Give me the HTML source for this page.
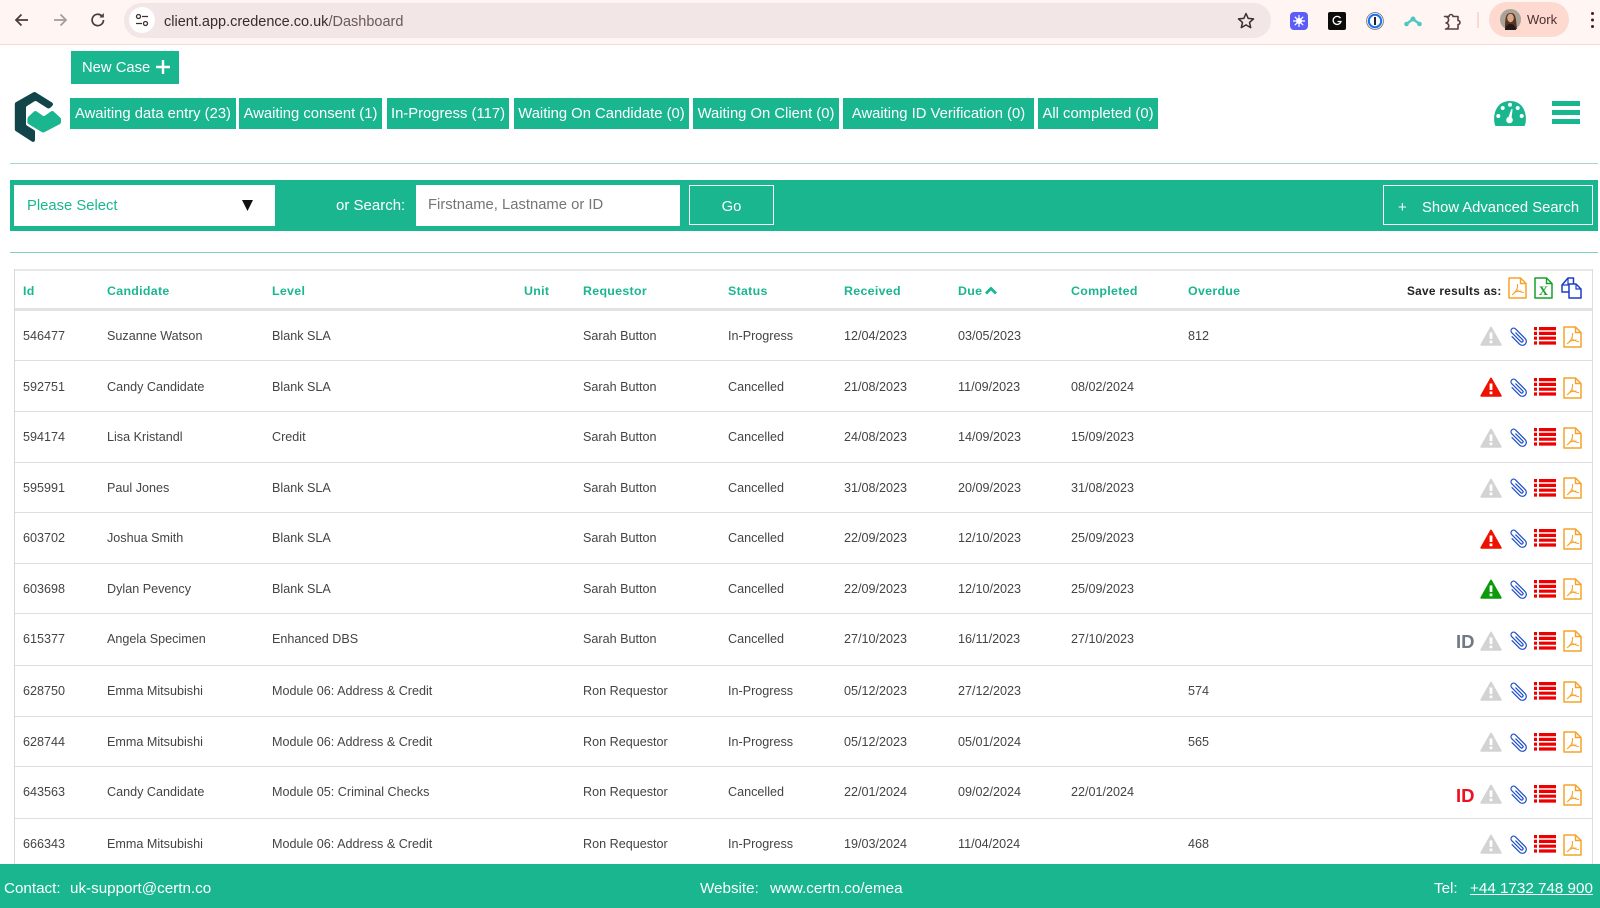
<!DOCTYPE html>
<html lang="en"><head><meta charset="utf-8"><title>Dashboard</title>
<style>
html,body{margin:0;padding:0;width:1600px;height:908px;overflow:hidden;background:#fff;font-family:"Liberation Sans",Arial,sans-serif}
#p{position:relative;width:1600px;height:908px;overflow:hidden}
.a,.r,.b,.h{position:absolute}
svg{display:block;overflow:visible}
#ch{left:0;top:0;width:1600px;height:44px;background:#fff5f2;border-bottom:1px solid #fbd9d0}
#om{left:124px;top:3px;width:1147px;height:35px;border-radius:18px;background:#f2e6e6}
.b{background:#1ab690;color:#fff;font-size:14.8px;line-height:33px;height:31px;top:98px;text-align:center;white-space:nowrap}
.r{left:0;width:1600px;height:16px;font-size:12.6px;line-height:16px;color:#444}
.r span{position:absolute;white-space:nowrap;top:0}
.c1{left:23px}.c2{left:107px}.c3{left:272px}.c5{left:583px}.c6{left:728px}.c7{left:844px}.c8{left:958px}.c9{left:1071px}.c10{left:1188px}
.h{top:283px;font-size:12.4px;line-height:16px;font-weight:bold;color:#1ab690;letter-spacing:.3px;white-space:nowrap}
.l{position:absolute;left:15px;width:1577px;height:1px;background:#dedede}
.id{position:absolute;font-size:18.5px;font-weight:bold;line-height:20px;white-space:nowrap;left:1456px}
.f{position:absolute;top:880px;color:#fff;font-size:15.2px;line-height:18px;white-space:nowrap}
</style></head><body><div id="p">

<svg width="0" height="0" style="position:absolute">
<defs>
<symbol id="pdf" viewBox="0 0 19 22"><path d="M1 1h11.500L18 6.500V21H1z" fill="#fff" stroke="#f5a32a" stroke-width="1.500" stroke-linejoin="round"/><path d="M12.500 1v5.500H18" fill="none" stroke="#f5a32a" stroke-width="1.400"/><path d="M9.500 7C10 11 8 15 4 18M9 12.500C10.500 14.500 13 15.500 16 15.500M6 15.500C8.500 14.500 11 14 13.500 14" fill="none" stroke="#f5a32a" stroke-width="1"/></symbol>
<symbol id="wg" viewBox="0 0 22 20"><path d="M11 1.500 20.800 18.800H1.200z" fill="#d3d3d3" stroke="#d3d3d3" stroke-width="1.800" stroke-linejoin="round"/><path d="M9.600 6.500h2.800v6.500H9.600zM9.600 14.500h2.800v2.800H9.600z" fill="#fff"/></symbol>
<symbol id="wr" viewBox="0 0 22 20"><path d="M11 1.500 20.800 18.800H1.200z" fill="#ee1100" stroke="#ee1100" stroke-width="1.800" stroke-linejoin="round"/><path d="M9.600 6.500h2.800v6.500H9.600zM9.600 14.500h2.800v2.800H9.600z" fill="#fff"/></symbol>
<symbol id="wn" viewBox="0 0 22 20"><path d="M11 1.500 20.800 18.800H1.200z" fill="#0a9a0a" stroke="#0a9a0a" stroke-width="1.800" stroke-linejoin="round"/><path d="M9.600 6.500h2.800v6.500H9.600zM9.600 14.500h2.800v2.800H9.600z" fill="#fff"/></symbol>
<symbol id="clip" viewBox="0 0 18 20"><g transform="rotate(-45 9 10) translate(9 10) scale(.88) translate(-9 -10)"><path d="M10.500 5V16a1.500 1.500 0 0 1-3 0V1.500a3 3 0 0 1 6 0V17a4.500 4.500 0 0 1-9 0V5" fill="none" stroke="#1f4fc8" stroke-width="1.400" stroke-linecap="round"/></g></symbol>
<symbol id="list" viewBox="0 0 22 18"><g fill="#ee0000"><path d="M0 0h3v3.200H0zM5 0h17v3.200H5zM0 4.800h3V8H0zM5 4.800h17V8H5zM0 9.600h3v3.200H0zM5 9.600h17v3.200H5zM0 14.400h3v3.200H0zM5 14.400h17v3.200H5z"/></g></symbol>
</defs></svg>

<!-- browser chrome -->
<div class="a" id="ch"></div>
<div class="a" id="om"></div>
<svg class="a" style="left:13px;top:12px" width="18" height="16" viewBox="0 0 18 16"><path d="M15 8H3M8.500 2.500 3 8l5.500 5.500" fill="none" stroke="#4a3a3a" stroke-width="1.700"/></svg>
<svg class="a" style="left:51px;top:12px" width="18" height="16" viewBox="0 0 18 16"><path d="M3 8h12M9.500 2.500 15 8l-5.500 5.500" fill="none" stroke="#a89a9a" stroke-width="1.700"/></svg>
<svg class="a" style="left:89px;top:11px" width="18" height="18" viewBox="0 0 18 18"><path d="M14.500 9a5.700 5.700 0 1 1-1.700-4.100" fill="none" stroke="#4a3a3a" stroke-width="1.700"/><path d="M14.800 2v4.500h-4.500z" fill="#4a3a3a"/></svg>
<div class="a" style="left:129px;top:7px;width:26px;height:26px;border-radius:50%;background:#fff"></div>
<svg class="a" style="left:135px;top:13px" width="14" height="14" viewBox="0 0 14 14"><circle cx="3.500" cy="3.500" r="2" fill="none" stroke="#3e2e2e" stroke-width="1.300"/><circle cx="10.500" cy="10.500" r="2" fill="none" stroke="#3e2e2e" stroke-width="1.300"/><path d="M7 3.500h6M1 10.500h6" stroke="#3e2e2e" stroke-width="1.300"/></svg>
<div class="a" style="left:164px;top:12.500px;font-size:14.500px;line-height:18px;color:#6a5a5a;white-space:nowrap"><span style="color:#3a2c2c">client.app.credence.co.uk</span>/Dashboard</div>
<svg class="a" style="left:1237px;top:12px" width="18" height="17" viewBox="0 0 18 17"><path d="M9 1.500l2.200 4.900 5.300.5-4 3.500 1.200 5.200L9 12.900 4.300 15.600l1.200-5.200-4-3.500 5.300-.5z" fill="none" stroke="#3e2e2e" stroke-width="1.500" stroke-linejoin="round"/></svg>
<div class="a" style="left:1290px;top:12px;width:18px;height:18px;border-radius:4px;background:#5c5cf6"></div>
<svg class="a" style="left:1293px;top:15px" width="12" height="12" viewBox="0 0 12 12"><circle cx="6" cy="6" r="3" fill="#fff"/><path d="M6 0v12M0 6h12M1.800 1.800l8.400 8.400M10.200 1.800l-8.400 8.400" stroke="#fff" stroke-width="1.200"/></svg>
<div class="a" style="left:1328px;top:12px;width:18px;height:18px;border-radius:2px;background:#0b0b0b"></div>
<svg class="a" style="left:1332px;top:16px" width="10" height="10" viewBox="0 0 10 10"><path d="M8.500 2.200A4 4 0 1 0 9 5.500H5.500" fill="none" stroke="#fff" stroke-width="1.300"/></svg>
<svg class="a" style="left:1366px;top:12px" width="18" height="18" viewBox="0 0 18 18"><circle cx="9" cy="9" r="8.400" fill="#fff" stroke="#777" stroke-width=".9"/><circle cx="9" cy="9" r="6.200" fill="none" stroke="#1a73e8" stroke-width="2"/><rect x="8" y="5" width="2" height="8" fill="#223"/></svg>
<svg class="a" style="left:1404px;top:15px" width="18" height="12" viewBox="0 0 18 12"><path d="M2.500 9 9 4l6.500 5" fill="none" stroke="#4ec8c0" stroke-width="2.400"/><circle cx="2.500" cy="9" r="2.300" fill="#4ec8c0"/><circle cx="9" cy="4" r="2.500" fill="#4ec8c0"/><circle cx="15.500" cy="9" r="2.300" fill="#4ec8c0"/></svg>
<svg class="a" style="left:1443px;top:12px" width="18" height="18" viewBox="0 0 18 18"><path d="M1.500 4.500H6a2 2 0 1 1 4 0h5v4a2 2 0 1 1 0 4v4.500H2.500a2.800 2.800 0 0 0 .5-6 3 3 0 0 0-1.500-6.500z" fill="none" stroke="#5a4040" stroke-width="1.600" stroke-linejoin="round"/></svg>
<div class="a" style="left:1477px;top:12px;width:2px;height:16px;background:#fbd9d0"></div>
<div class="a" style="left:1489px;top:2px;width:80px;height:35px;border-radius:18px;background:#fdd9d0"></div>
<svg class="a" style="left:1500px;top:9px" width="21" height="21" viewBox="0 0 21 21"><circle cx="10.500" cy="10.500" r="10.500" fill="#a9a296"/><path d="M5 21c0-14 1-17 6-17s5 6 6 16z" fill="#5a3420"/><ellipse cx="10.500" cy="9" rx="3.300" ry="4.200" fill="#d8a888"/><path d="M5 21c1-5 3-6 5.500-6s5 1 5.500 6z" fill="#201a18"/></svg>
<div class="a" style="left:1527px;top:12px;font-size:13px;line-height:16px;color:#4a3030">Work</div>
<div class="a" style="left:1590.500px;top:11.500px;width:3px;height:3px;border-radius:50%;background:#4a1a1a;box-shadow:0 6.500px 0 #4a1a1a,0 13px 0 #4a1a1a"></div>

<!-- header -->
<div class="b" style="left:71px;top:51px;width:108px;height:33px;line-height:34px;text-align:left;text-indent:11px">New Case</div>
<svg class="a" style="left:156px;top:60px" width="14" height="14" viewBox="0 0 14 14"><path d="M7 0v14M0 7h14" stroke="#fff" stroke-width="2.400"/></svg>

<svg class="a" style="left:14px;top:91px" width="50" height="52" viewBox="14 91 50 52"><path d="M33 92.500c1-.6 2-.6 3 0l16 10c1.200.8 1.300 2.300.3 3.300l-2 2c-.8.800-2 .9-3 .3l-10.800-6.800c-.7-.4-1.300-.4-2 0l-7.500 4.700c-.7.400-1 1-1 1.800v16c0 .8.300 1.400 1 1.800l7 4.400c.7.400 1 1 1 1.800v8c0 1.800-1.600 2.700-3 1.800l-16-10.300c-.8-.5-1.200-1.300-1.200-2.200v-24.800c0-.9.400-1.700 1.200-2.200z" fill="#12454a"/><path d="M27.500 117.500l6.500-6c.8-.7 1.800-.7 2.600-.1l6.200 4.400c.7.500 1.300.5 2 0l6.200-4.400c.8-.6 1.800-.6 2.600.1l6.500 6c.6.500.9 1.200.9 2v2.500c0 .9-.4 1.600-1.200 2.100l-15.200 8c-1 .5-1.800.5-2.800 0l-13.200-8c-.8-.5-1.200-1.200-1.200-2.100v-2.500c0-.8.300-1.500 1-2z" fill="#1ab690"/></svg>

<div class="b" style="left:70px;width:166px">Awaiting data entry (23)</div>
<div class="b" style="left:239px;width:143px">Awaiting consent (1)</div>
<div class="b" style="left:387px;width:122px">In-Progress (117)</div>
<div class="b" style="left:514px;width:175px">Waiting On Candidate (0)</div>
<div class="b" style="left:693px;width:146px">Waiting On Client (0)</div>
<div class="b" style="left:843px;width:191px">Awaiting ID Verification (0)</div>
<div class="b" style="left:1038px;width:120px">All completed (0)</div>

<svg class="a" style="left:1494px;top:101px" width="32" height="25" viewBox="0 0 32 25"><path d="M1.500 25C-1.500 20-1 0 16 0S33.500 20 30.500 25z" fill="#1ab690"/><g fill="#fff"><circle cx="16" cy="3.800" r="2"/><circle cx="8.700" cy="7" r="2"/><circle cx="23.700" cy="7" r="2"/><circle cx="4.300" cy="15" r="2"/><circle cx="27.700" cy="15" r="2"/><circle cx="15.500" cy="19" r="3.300"/><path d="M13.800 18 17.300 8.300h1.300L17.300 19z"/></g></svg>
<div class="a" style="left:1552px;top:101px;width:28px;height:5px;background:#1ab690"></div>
<div class="a" style="left:1552px;top:110px;width:28px;height:5px;background:#1ab690"></div>
<div class="a" style="left:1552px;top:119px;width:28px;height:5px;background:#1ab690"></div>
<div class="a" style="left:10px;top:163px;width:1588px;height:1px;background:#a5d8c6"></div>

<!-- search bar -->
<div class="a" style="left:10px;top:180px;width:1588px;height:51px;background:#1ab690"></div>
<div class="a" style="left:14px;top:185px;width:261px;height:41px;background:#fff"></div>
<div class="a" style="left:27px;top:197px;font-size:14.800px;line-height:18px;color:#1ab690">Please Select</div>
<svg class="a" style="left:242px;top:200px" width="11" height="11" viewBox="0 0 11 11"><path d="M0 0h11L5.500 11z" fill="#111"/></svg>
<div class="a" style="left:336px;top:196.500px;font-size:15px;line-height:18px;color:#fff">or Search:</div>
<div class="a" style="left:416px;top:185px;width:264px;height:41px;background:#fff"></div>
<div class="a" style="left:428px;top:196px;font-size:14.800px;line-height:18px;color:#757575">Firstname, Lastname or ID</div>
<div class="a" style="left:689px;top:185px;width:83px;height:38px;border:1px solid #fff;color:#fff;font-size:14.800px;line-height:43px;text-align:center">Go</div>
<div class="a" style="left:1383px;top:185px;width:208px;height:38px;border:1px solid #fff"></div>
<div class="a" style="left:1398px;top:199px;font-size:15px;line-height:18px;color:#fff">+</div>
<div class="a" style="left:1422px;top:198.500px;font-size:14.800px;line-height:18px;color:#fff;white-space:nowrap">Show Advanced Search</div>
<div class="a" style="left:10px;top:252px;width:1588px;height:1px;background:#7fd4b8"></div>

<!-- table frame -->
<div class="a" style="left:14px;top:269px;width:1578px;height:2px;background:#e8e8e8"></div>
<div class="a" style="left:14px;top:269px;width:1px;height:600px;background:#d8d8d8"></div>
<div class="a" style="left:1592px;top:269px;width:1px;height:600px;background:#dcdcdc"></div>
<div class="a" style="left:15px;top:308px;width:1577px;height:3px;background:#e2e2e2"></div>

<div class="h" style="left:23px">Id</div>
<div class="h" style="left:107px">Candidate</div>
<div class="h" style="left:272px">Level</div>
<div class="h" style="left:524px">Unit</div>
<div class="h" style="left:583px">Requestor</div>
<div class="h" style="left:728px">Status</div>
<div class="h" style="left:844px">Received</div>
<div class="h" style="left:958px">Due</div>
<svg class="a" style="left:985px;top:286px" width="12" height="9" viewBox="0 0 12 9"><path d="M1 7.500 6 2.500l5 5" fill="none" stroke="#1ab690" stroke-width="2.800"/></svg>
<div class="h" style="left:1071px">Completed</div>
<div class="h" style="left:1188px">Overdue</div>
<div class="h" style="left:1407px;color:#222;font-size:11.800px;letter-spacing:.3px">Save results as:</div>

<svg class="a" style="left:1508px;top:277px" width="19" height="22"><use href="#pdf"/></svg>
<svg class="a" style="left:1534px;top:277px" width="19" height="22" viewBox="0 0 19 22"><path d="M1 1h11.500L18 6.500V21H1z" fill="#fff" stroke="#18a02a" stroke-width="1.500" stroke-linejoin="round"/><path d="M12.500 1v5.500H18" fill="none" stroke="#18a02a" stroke-width="1.400"/><text x="9.500" y="18" text-anchor="middle" font-family="Liberation Serif,serif" font-weight="bold" font-size="13" fill="#18a02a">X</text></svg>
<svg class="a" style="left:1561px;top:277px" width="21" height="22" viewBox="0 0 21 22"><path d="M1 8 7 1h5.500v14H1z" fill="#fff" stroke="#1a3cc8" stroke-width="1.500" stroke-linejoin="round"/><path d="M8 7h7l5 5v9H8z" fill="#fff" stroke="#1a3cc8" stroke-width="1.500" stroke-linejoin="round"/><path d="M1 8h6V1M15 7v5h5" fill="none" stroke="#1a3cc8" stroke-width="1.200"/></svg>

<!-- rows -->
<div class="r" style="top:328px"><span class="c1">546477</span><span class="c2">Suzanne Watson</span><span class="c3">Blank SLA</span><span class="c5">Sarah Button</span><span class="c6">In-Progress</span><span class="c7">12/04/2023</span><span class="c8">03/05/2023</span><span class="c10">812</span></div>
<div class="l" style="top:360px"></div>
<div class="r" style="top:379px"><span class="c1">592751</span><span class="c2">Candy Candidate</span><span class="c3">Blank SLA</span><span class="c5">Sarah Button</span><span class="c6">Cancelled</span><span class="c7">21/08/2023</span><span class="c8">11/09/2023</span><span class="c9">08/02/2024</span></div>
<div class="l" style="top:411px"></div>
<div class="r" style="top:429px"><span class="c1">594174</span><span class="c2">Lisa Kristandl</span><span class="c3">Credit</span><span class="c5">Sarah Button</span><span class="c6">Cancelled</span><span class="c7">24/08/2023</span><span class="c8">14/09/2023</span><span class="c9">15/09/2023</span></div>
<div class="l" style="top:462px"></div>
<div class="r" style="top:480px"><span class="c1">595991</span><span class="c2">Paul Jones</span><span class="c3">Blank SLA</span><span class="c5">Sarah Button</span><span class="c6">Cancelled</span><span class="c7">31/08/2023</span><span class="c8">20/09/2023</span><span class="c9">31/08/2023</span></div>
<div class="l" style="top:512px"></div>
<div class="r" style="top:530px"><span class="c1">603702</span><span class="c2">Joshua Smith</span><span class="c3">Blank SLA</span><span class="c5">Sarah Button</span><span class="c6">Cancelled</span><span class="c7">22/09/2023</span><span class="c8">12/10/2023</span><span class="c9">25/09/2023</span></div>
<div class="l" style="top:563px"></div>
<div class="r" style="top:581px"><span class="c1">603698</span><span class="c2">Dylan Pevency</span><span class="c3">Blank SLA</span><span class="c5">Sarah Button</span><span class="c6">Cancelled</span><span class="c7">22/09/2023</span><span class="c8">12/10/2023</span><span class="c9">25/09/2023</span></div>
<div class="l" style="top:613px"></div>
<div class="r" style="top:631px"><span class="c1">615377</span><span class="c2">Angela Specimen</span><span class="c3">Enhanced DBS</span><span class="c5">Sarah Button</span><span class="c6">Cancelled</span><span class="c7">27/10/2023</span><span class="c8">16/11/2023</span><span class="c9">27/10/2023</span></div>
<div class="l" style="top:665px"></div>
<div class="r" style="top:683px"><span class="c1">628750</span><span class="c2">Emma Mitsubishi</span><span class="c3">Module 06: Address &amp; Credit</span><span class="c5">Ron Requestor</span><span class="c6">In-Progress</span><span class="c7">05/12/2023</span><span class="c8">27/12/2023</span><span class="c10">574</span></div>
<div class="l" style="top:716px"></div>
<div class="r" style="top:734px"><span class="c1">628744</span><span class="c2">Emma Mitsubishi</span><span class="c3">Module 06: Address &amp; Credit</span><span class="c5">Ron Requestor</span><span class="c6">In-Progress</span><span class="c7">05/12/2023</span><span class="c8">05/01/2024</span><span class="c10">565</span></div>
<div class="l" style="top:766px"></div>
<div class="r" style="top:784px"><span class="c1">643563</span><span class="c2">Candy Candidate</span><span class="c3">Module 05: Criminal Checks</span><span class="c5">Ron Requestor</span><span class="c6">Cancelled</span><span class="c7">22/01/2024</span><span class="c8">09/02/2024</span><span class="c9">22/01/2024</span></div>
<div class="l" style="top:818px"></div>
<div class="r" style="top:836px"><span class="c1">666343</span><span class="c2">Emma Mitsubishi</span><span class="c3">Module 06: Address &amp; Credit</span><span class="c5">Ron Requestor</span><span class="c6">In-Progress</span><span class="c7">19/03/2024</span><span class="c8">11/04/2024</span><span class="c10">468</span></div>

<!-- row action icons -->
<svg class="a" style="left:1480px;top:326px" width="22" height="20"><use href="#wg"/></svg><svg class="a" style="left:1509px;top:327px" width="18" height="20"><use href="#clip"/></svg><svg class="a" style="left:1534px;top:327px" width="22" height="18"><use href="#list"/></svg><svg class="a" style="left:1563px;top:326px" width="19" height="22"><use href="#pdf"/></svg>
<svg class="a" style="left:1480px;top:377px" width="22" height="20"><use href="#wr"/></svg><svg class="a" style="left:1509px;top:378px" width="18" height="20"><use href="#clip"/></svg><svg class="a" style="left:1534px;top:378px" width="22" height="18"><use href="#list"/></svg><svg class="a" style="left:1563px;top:377px" width="19" height="22"><use href="#pdf"/></svg>
<svg class="a" style="left:1480px;top:428px" width="22" height="20"><use href="#wg"/></svg><svg class="a" style="left:1509px;top:428px" width="18" height="20"><use href="#clip"/></svg><svg class="a" style="left:1534px;top:428px" width="22" height="18"><use href="#list"/></svg><svg class="a" style="left:1563px;top:427px" width="19" height="22"><use href="#pdf"/></svg>
<svg class="a" style="left:1480px;top:478px" width="22" height="20"><use href="#wg"/></svg><svg class="a" style="left:1509px;top:478px" width="18" height="20"><use href="#clip"/></svg><svg class="a" style="left:1534px;top:479px" width="22" height="18"><use href="#list"/></svg><svg class="a" style="left:1563px;top:477px" width="19" height="22"><use href="#pdf"/></svg>
<svg class="a" style="left:1480px;top:529px" width="22" height="20"><use href="#wr"/></svg><svg class="a" style="left:1509px;top:529px" width="18" height="20"><use href="#clip"/></svg><svg class="a" style="left:1534px;top:529px" width="22" height="18"><use href="#list"/></svg><svg class="a" style="left:1563px;top:528px" width="19" height="22"><use href="#pdf"/></svg>
<svg class="a" style="left:1480px;top:579px" width="22" height="20"><use href="#wn"/></svg><svg class="a" style="left:1509px;top:580px" width="18" height="20"><use href="#clip"/></svg><svg class="a" style="left:1534px;top:580px" width="22" height="18"><use href="#list"/></svg><svg class="a" style="left:1563px;top:578px" width="19" height="22"><use href="#pdf"/></svg>
<div class="id" style="top:632px;color:#6f7a85">ID</div><svg class="a" style="left:1480px;top:631px" width="22" height="20"><use href="#wg"/></svg><svg class="a" style="left:1509px;top:631px" width="18" height="20"><use href="#clip"/></svg><svg class="a" style="left:1534px;top:632px" width="22" height="18"><use href="#list"/></svg><svg class="a" style="left:1563px;top:630px" width="19" height="22"><use href="#pdf"/></svg>
<svg class="a" style="left:1480px;top:681px" width="22" height="20"><use href="#wg"/></svg><svg class="a" style="left:1509px;top:682px" width="18" height="20"><use href="#clip"/></svg><svg class="a" style="left:1534px;top:682px" width="22" height="18"><use href="#list"/></svg><svg class="a" style="left:1563px;top:681px" width="19" height="22"><use href="#pdf"/></svg>
<svg class="a" style="left:1480px;top:732px" width="22" height="20"><use href="#wg"/></svg><svg class="a" style="left:1509px;top:733px" width="18" height="20"><use href="#clip"/></svg><svg class="a" style="left:1534px;top:733px" width="22" height="18"><use href="#list"/></svg><svg class="a" style="left:1563px;top:731px" width="19" height="22"><use href="#pdf"/></svg>
<div class="id" style="top:786px;color:#ee1122">ID</div><svg class="a" style="left:1480px;top:784px" width="22" height="20"><use href="#wg"/></svg><svg class="a" style="left:1509px;top:785px" width="18" height="20"><use href="#clip"/></svg><svg class="a" style="left:1534px;top:785px" width="22" height="18"><use href="#list"/></svg><svg class="a" style="left:1563px;top:784px" width="19" height="22"><use href="#pdf"/></svg>
<svg class="a" style="left:1480px;top:834px" width="22" height="20"><use href="#wg"/></svg><svg class="a" style="left:1509px;top:835px" width="18" height="20"><use href="#clip"/></svg><svg class="a" style="left:1534px;top:835px" width="22" height="18"><use href="#list"/></svg><svg class="a" style="left:1563px;top:834px" width="19" height="22"><use href="#pdf"/></svg>

<!-- footer -->
<div class="a" style="left:0;top:864px;width:1600px;height:44px;background:#1ab690"></div>
<div class="f" style="left:4px">Contact:</div>
<div class="f" style="left:70px">uk-support@certn.co</div>
<div class="f" style="left:700px">Website:</div>
<div class="f" style="left:770px">www.certn.co/emea</div>
<div class="f" style="left:1434px">Tel:</div>
<div class="f" style="left:1470px;text-decoration:underline">+44 1732 748 900</div>
</div></body></html>
